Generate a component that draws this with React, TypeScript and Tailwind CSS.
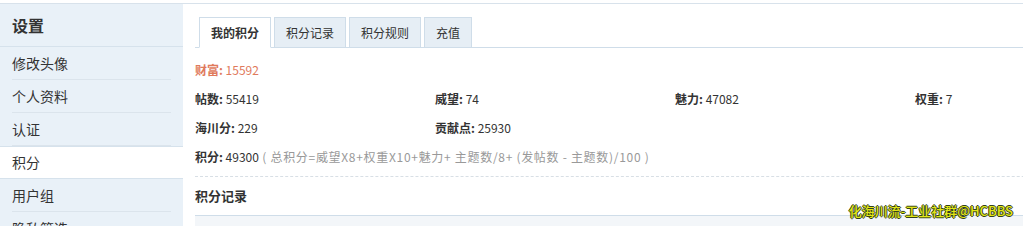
const menu = ["修改头像", "个人资料", "认证", "积分", "用户组", "隐私筛选"];
const tabs = ["我的积分", "积分记录", "积分规则", "充值"];

const stats = [
  [
    { label: "帖数", value: "55419" },
    { label: "威望", value: "74" },
    { label: "魅力", value: "47082" },
    { label: "权重", value: "7" },
  ],
  [
    { label: "海川分", value: "229" },
    { label: "贡献点", value: "25930" },
  ],
];

export default function App() {
  return (
    <div
      className="relative h-[226px] w-[1023px] overflow-hidden bg-white pt-[3px] text-[#333]"
      style={{ fontFamily: '"Noto Sans CJK SC", "Noto Sans", sans-serif' }}
    >
      <div className="flex h-full border-t border-[#d8e2eb]">
        {/* Sidebar */}
        <aside className="w-[183px] shrink-0 bg-[#e9f1f8]">
          <div className="flex h-[43px] items-center border-b border-[#d6e2ec] pl-3 text-[16px] font-bold text-[#333]">
            设置
          </div>
          <ul>
            {menu.map((item) => {
              const active = item === "积分";
              return active ? (
                <li
                  key={item}
                  className="flex h-[33px] items-center border-y border-[#d6e2ec] bg-white pl-3 text-[14px]"
                >
                  {item}
                </li>
              ) : (
                <li key={item} className="mx-3 flex h-[33px] items-center border-b border-[#dbe4ec] text-[14px]">
                  {item}
                </li>
              );
            })}
          </ul>
        </aside>

        {/* Main */}
        <main className="flex-1 pl-3 pt-[13px]">
          <div className="flex gap-[3px] border-b border-[#cfdde9] pl-1">
            {tabs.map((t, i) =>
              i === 0 ? (
                <div
                  key={t}
                  className="-mb-px flex h-[31px] items-center border border-b-white border-[#cfdde9] bg-white px-[11px] text-[12px] font-bold"
                >
                  {t}
                </div>
              ) : (
                <div
                  key={t}
                  className="flex h-[30px] items-center border border-b-0 border-[#cfdde9] bg-[#e6eef5] px-[11px] text-[12px]"
                >
                  {t}
                </div>
              )
            )}
          </div>

          <div className="pt-[7px] text-[12px]">
            <div className="flex h-[29px] items-center text-[#e07a5c]">
              <span className="font-bold">财富: </span>
              <span>&nbsp;15592</span>
            </div>
            {stats.map((row, r) => (
              <div key={r} className="flex h-[29px] items-center">
                {row.map((s) => (
                  <div key={s.label} className="w-[240px] shrink-0">
                    <span className="font-bold">{s.label}: </span>
                    <span>{s.value}</span>
                  </div>
                ))}
              </div>
            ))}
            <div className="flex h-[29px] items-center">
              <span className="font-bold">积分: </span>
              <span>&nbsp;49300</span>
              <span className="tracking-[0.7px] text-[#999]">
                &nbsp;( 总积分=威望X8+权重X10+魅力+ 主题数/8+ (发帖数 - 主题数)/100 )
              </span>
            </div>
          </div>

          <div className="mt-[5px] border-t border-dashed border-[#d8dfe5]" />
          <div className="flex h-[38px] items-center text-[13px] font-bold">积分记录</div>
          <div className="h-[12px] border-t border-[#cfdde9] bg-[#f3f6f9]" />
        </main>
      </div>

      {/* Watermark */}
      <div
        className="absolute right-[10px] top-[201px] text-[13px] font-medium text-[#e2e619]"
        style={{
          textShadow:
            "1px 0 0 #33421a, -1px 0 0 #33421a, 0 1px 0 #33421a, 0 -1px 0 #33421a",
        }}
      >
        化海川流-工业社群@HCBBS
      </div>
    </div>
  );
}
